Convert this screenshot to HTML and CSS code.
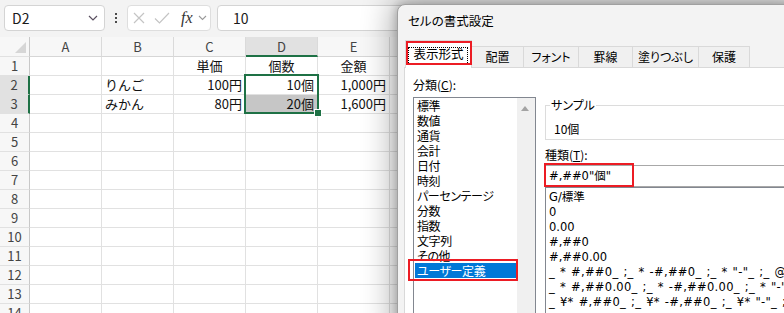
FILE: index.html
```html
<!DOCTYPE html>
<html lang="ja">
<head>
<meta charset="utf-8">
<title>セルの書式設定</title>
<link rel="stylesheet" href="styles.css">
</head>
<body>
<div class="app">
  <div class="fbar">
    <div class="namebox"><span>D2</span><svg width="10" height="6" viewBox="0 0 10 6"><path d="M1 1l4 4 4-4" fill="none" stroke="#5a5060" stroke-width="1.2"/></svg></div>
    <div class="kebab"><i></i><i></i><i></i></div>
    <div class="fnbox">
      <svg class="ic-x" width="12" height="12" viewBox="0 0 12 12"><path d="M1 1l10 10M11 1L1 11" stroke="#c4c4c4" stroke-width="1.2" fill="none"/></svg>
      <svg class="ic-ok" width="16" height="12" viewBox="0 0 16 12"><path d="M1 6.5l4.5 4.5L15 1" stroke="#c4c4c4" stroke-width="1.2" fill="none"/></svg>
      <span class="fx">fx</span>
      <svg class="ic-dd" width="9" height="6" viewBox="0 0 9 6"><path d="M1 1l3.5 3.5L8 1" fill="none" stroke="#9a9a9a" stroke-width="1.1"/></svg>
    </div>
    <div class="formula">10</div>
  </div>

  <div class="sheet">
    <div class="corner"><svg width="30" height="20" viewBox="0 0 30 20"><path d="M15 16H26V5Z" fill="#d6d6d6"/></svg></div>
    <div class="ch">A</div><div class="ch">B</div><div class="ch">C</div><div class="ch on">D</div><div class="ch">E</div><div class="ch">F</div>

    <div class="rh">1</div><div></div><div></div><div class="c">単価</div><div class="c">個数</div><div class="c">金額</div><div></div>
    <div class="rh on">2</div><div></div><div>りんご</div><div class="r">100円</div><div class="r">10個</div><div class="r">1,000円</div><div></div>
    <div class="rh on">3</div><div></div><div>みかん</div><div class="r">80円</div><div class="r shade">20個</div><div class="r">1,600円</div><div></div>
    <div class="rh">4</div><div></div><div></div><div></div><div></div><div></div><div></div>
    <div class="rh">5</div><div></div><div></div><div></div><div></div><div></div><div></div>
    <div class="rh">6</div><div></div><div></div><div></div><div></div><div></div><div></div>
    <div class="rh">7</div><div></div><div></div><div></div><div></div><div></div><div></div>
    <div class="rh">8</div><div></div><div></div><div></div><div></div><div></div><div></div>
    <div class="rh">9</div><div></div><div></div><div></div><div></div><div></div><div></div>
    <div class="rh">10</div><div></div><div></div><div></div><div></div><div></div><div></div>
    <div class="rh">11</div><div></div><div></div><div></div><div></div><div></div><div></div>
    <div class="rh">12</div><div></div><div></div><div></div><div></div><div></div><div></div>
    <div class="rh">13</div><div></div><div></div><div></div><div></div><div></div><div></div>
    <div class="rh">14</div><div></div><div></div><div></div><div></div><div></div><div></div>

    <span class="selbox"><i class="handle"></i></span>
  </div>

  <div class="dlg">
    <div class="title">セルの書式設定</div>
    <div class="tabs">
      <div class="tab on w1"><span class="focus"></span><span class="redbox rb-tab"></span>表示形式</div>
      <div class="tab w2">配置</div>
      <div class="tab w3">フォント</div>
      <div class="tab w4">罫線</div>
      <div class="tab w5">塗りつぶし</div>
      <div class="tab w6">保護</div>
    </div>
    <div class="panel">
      <div class="lcol">
        <div class="lbl">分類(<u>C</u>):</div>
        <div class="catlist">
          <div class="items">
            <div>標準</div>
            <div>数値</div>
            <div>通貨</div>
            <div>会計</div>
            <div>日付</div>
            <div>時刻</div>
            <div>パーセンテージ</div>
            <div>分数</div>
            <div>指数</div>
            <div>文字列</div>
            <div>その他</div>
            <div class="sel">ユーザー定義</div>
          </div>
          <div class="vscroll"><svg width="8" height="5" viewBox="0 0 8 5"><path d="M0 5L4 0 8 5Z" fill="#a3a3a3"/></svg></div>
          <span class="redbox rb-cat"></span>
        </div>
      </div>
      <div class="rcol">
        <fieldset class="sample">
          <legend>サンプル</legend>
          <div class="sval">10個</div>
        </fieldset>
        <div class="lbl lbl2">種類(<u>T</u>):</div>
        <div class="fmtwrap">
          <div class="fmtinput">#,##0"個"</div>
          <span class="redbox rb-input"></span>
        </div>
        <div class="fmtlist">
          <div>G/標準</div>
          <div>0</div>
          <div>0.00</div>
          <div>#,##0</div>
          <div>#,##0.00</div>
          <div class="wide">_ * #,##0_ ;_ * -#,##0_ ;_ * "-"_ ;_ @_ </div>
          <div class="wide">_ * #,##0.00_ ;_ * -#,##0.00_ ;_ * "-"??_ ;_ @_ </div>
          <div class="wide">_ ¥* #,##0_ ;_ ¥* -#,##0_ ;_ ¥* "-"_ ;_ @_ </div>
        </div>
      </div>
    </div>
  </div>
</div>
</body>
</html>
```

FILE: styles.css
```css
* { box-sizing: border-box; margin: 0; padding: 0; }
html, body { width: 784px; height: 313px; overflow: hidden; }
body {
  background: #fff;
  font-family: "Noto Sans CJK JP", "Noto Sans", sans-serif;
  color: #000;
}
.app { position: relative; width: 784px; height: 313px; overflow: hidden; }

/* formula bar */
.fbar {
  height: 37px;
  background: #f3f3f3;
  display: flex;
  align-items: flex-start;
  padding: 5px 0 0 4px;
}
.namebox {
  width: 101px; height: 26px;
  background: #fff;
  border: 1px solid #d4d4d4;
  border-radius: 4px;
  display: flex; align-items: center; justify-content: space-between;
  padding: 0 6px 0 7px;
  font-size: 14px; color: #1a1a1a;
}
.kebab {
  width: 22px; height: 26px;
  display: flex; flex-direction: column; align-items: center; justify-content: center;
  gap: 2px;
}
.kebab i { display: block; width: 2px; height: 2px; background: #4a4a4a; }
.fnbox {
  width: 84px; height: 26px;
  background: #fff;
  border: 1px solid #dedede;
  border-radius: 4px;
  display: flex; align-items: center;
  padding-left: 5px;
}
.ic-ok { margin-left: 9px; }
.fx {
  margin-left: 11px;
  font-family: "Liberation Serif", serif;
  font-style: italic;
  font-size: 16px; color: #333;
  line-height: 20px;
}
.ic-dd { margin-left: 5px; }
.formula {
  flex: 1;
  margin-left: 6px;
  height: 26px;
  background: #fff;
  border: 1px solid #d4d4d4;
  border-radius: 4px;
  padding-left: 15px;
  font-size: 14px; line-height: 24px; color: #1a1a1a;
}

/* sheet */
.sheet {
  position: relative;
  display: grid;
  grid-template-columns: 30px repeat(6, 72px);
  grid-template-rows: 20px;
  grid-auto-rows: 19px;
  font-size: 13px;
}
.sheet > div {
  border-right: 1px solid #e1e1e1;
  border-bottom: 1px solid #e1e1e1;
  line-height: 18px;
  white-space: nowrap;
  padding: 0 3px;
  color: #111;
}
.sheet > .corner { padding: 0; background: #f7f7f7; border-right-color: #c8c8c8; }
.corner svg { display: block; }
.sheet > .ch {
  background: #f7f7f7;
  text-align: center;
  color: #444;
  line-height: 19px;
  border-right-color: #dadada;
  border-bottom-color: #d6d6d6;
}
.sheet > .ch.on { background: #e1e1e1; border-bottom: 2px solid #1e7145; }
.sheet > .rh {
  background: #f7f7f7;
  text-align: center;
  color: #444;
  padding: 0;
  border-right-color: #c8c8c8;
}
.sheet > .rh.on { background: #e1e1e1; border-right: 2px solid #1e7145; }
.sheet > .c { text-align: center; }
.sheet > .r { text-align: right; }
.sheet > .shade { background: #c6c6c6; }
.selbox {
  position: absolute;
  left: 244px; top: 37px;
  width: 75px; height: 40px;
  border: 2px solid #1e7145;
}
.handle {
  position: absolute;
  right: -4px; bottom: -4px;
  width: 6px; height: 6px;
  background: #1e7145;
  outline: 1px solid #fff;
}

/* dialog */
.dlg {
  position: absolute;
  left: 397px; top: 4px;
  width: 400px; height: 330px;
  background: #f3f3f3;
  border: 1px solid #a0a0a0;
  border-radius: 8px 0 0 0;
  box-shadow: 0 0 30px 6px rgba(0, 0, 0, .3), 0 0 8px 1px rgba(0, 0, 0, .2);
  font-size: 12px;
  font-feature-settings: "palt" 1;
}
.title { height: 31px; line-height: 31px; padding-left: 10px; font-size: 12.5px; }
.tabs {
  height: 31px;
  display: flex; align-items: flex-end;
  padding-left: 7px;
}
.tab {
  position: relative;
  height: 21px;
  border: 1px solid #d9d9d9;
  border-bottom: 0;
  margin-left: -1px;
  background: #f0f0f0;
  text-align: center;
  line-height: 20px;
  white-space: nowrap;
}
.tab.on {
  height: 28px;
  margin-left: 0;
  margin-bottom: -1px;
  background: #fff;
  z-index: 1;
  line-height: 26px;
  font-size: 12.5px;
}
.w1 { width: 67px; }
.w2 { width: 53px; }
.w3 { width: 56px; }
.w4 { width: 55px; }
.w5 { width: 67px; }
.w6 { width: 52px; }
.focus {
  position: absolute;
  left: 2px; top: 6px;
  width: 60px; height: 18px;
  border: 1px dotted #000;
}
.redbox { position: absolute; border: 2px solid #ec1c24; }
.rb-tab { left: 0; top: 0; width: 66px; height: 24px; }

.panel {
  margin-left: 6px;
  height: 268px;
  background: #fff;
  border: 1px solid #d9d9d9;
  display: flex;
  gap: 9px;
  padding: 7px 0 0 8px;
}
.lcol { width: 123px; flex: none; }
.lbl { line-height: 20px; margin-bottom: 2px; }
.catlist {
  position: relative;
  height: 240px;
  border: 1px solid #828790;
  display: flex;
}
.items { flex: 1; padding-left: 1px; letter-spacing: -0.4px; }
.items div {
  height: 15px;
  line-height: 15px;
  padding-left: 2px;
  white-space: nowrap;
}
.items .sel { background: #0078d7; color: #fff; }
.vscroll { width: 18px; background: #f0f0f0; padding: 8px 0 0 4px; }
.vscroll svg { display: block; }
.rb-cat { left: -6px; top: 161px; width: 110px; height: 22px; }

.rcol { flex: 1; min-width: 0; padding-top: 22px; }
.sample {
  margin: 0;
  padding: 7px 8px 1px;
  border: 1px solid #dcdcdc;
  min-width: 0;
}
.sample legend { margin-left: -4px; padding: 0 1px; line-height: 16px; }
.sval { line-height: 18px; }
.lbl2 { margin-top: 4px; margin-bottom: 0; line-height: 21px; }
.fmtwrap { position: relative; }
.fmtinput, .fmtlist {
  font-family: "DejaVu Sans", "Noto Sans CJK JP", sans-serif;
  font-size: 11.5px;
  font-feature-settings: normal;
}
.fmtinput {
  height: 22px;
  border: 1px solid #a8a8a8;
  padding-left: 3px;
  line-height: 20px;
  white-space: pre;
}
.rb-input { left: -1px; top: -2px; width: 90px; height: 24px; }
.fmtlist {
  height: 200px;
  border-top: 1px solid #828790;
  border-left: 1px solid #828790;
  padding: 2px 0 0 3px;
  overflow: hidden;
}
.fmtlist div { height: 15px; line-height: 15px; white-space: pre; }
.fmtlist .wide { letter-spacing: 0.3px; word-spacing: 1px; }
```
